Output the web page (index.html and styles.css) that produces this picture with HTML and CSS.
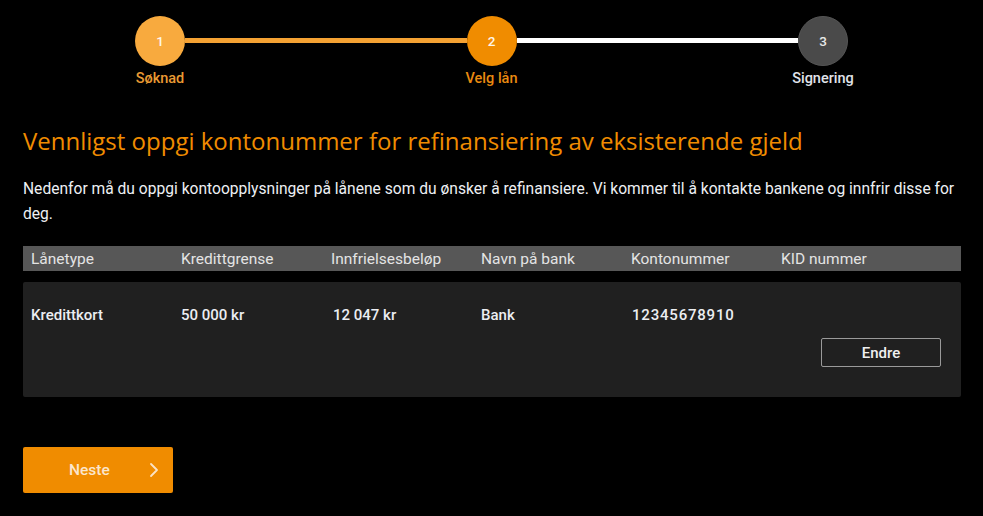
FILE: index.html
```html
<!DOCTYPE html>
<html lang="no">
<head>
<meta charset="utf-8">
<title>Velg lån</title>
<link rel="stylesheet" href="styles.css">
</head>
<body>
<div class="page">
  <div class="stepper">
    <div class="step step-done">
      <div class="circle">1</div>
      <div class="label">Søknad</div>
    </div>
    <div class="line line-done"></div>
    <div class="step step-active">
      <div class="circle">2</div>
      <div class="label">Velg lån</div>
    </div>
    <div class="line line-todo"></div>
    <div class="step step-todo">
      <div class="circle">3</div>
      <div class="label">Signering</div>
    </div>
  </div>

  <h1 class="title">Vennligst oppgi kontonummer for refinansiering av eksisterende gjeld</h1>
  <p class="intro">Nedenfor må du oppgi kontoopplysninger på lånene som du ønsker å refinansiere. Vi kommer til å kontakte bankene og innfrir disse for deg.</p>

  <div class="table-head">
    <div class="cell">Lånetype</div>
    <div class="cell">Kredittgrense</div>
    <div class="cell">Innfrielsesbeløp</div>
    <div class="cell">Navn på bank</div>
    <div class="cell">Kontonummer</div>
    <div class="cell">KID nummer</div>
  </div>

  <div class="table-row">
    <div class="row-cells">
      <div class="cell">Kredittkort</div>
      <div class="cell">50 000 kr</div>
      <div class="cell cell-amount">12 047 kr</div>
      <div class="cell">Bank</div>
      <div class="cell cell-number">12345678910</div>
      <div class="cell"></div>
    </div>
    <div class="row-actions">
      <button class="btn-outline" type="button">Endre</button>
    </div>
  </div>

  <button class="btn-next" type="button">
    <span>Neste</span>
    <svg width="10" height="16" viewBox="0 0 10 16" aria-hidden="true"><polyline points="2,2 8,8 2,14" fill="none" stroke="#fbe3c4" stroke-width="1.8" stroke-linecap="round" stroke-linejoin="round"/></svg>
  </button>
</div>
</body>
</html>
```

FILE: styles.css
```css
* { box-sizing: border-box; }
html, body {
  margin: 0;
  padding: 0;
  background: #000;
}
body {
  font-family: Roboto, "Liberation Sans", Arial, sans-serif;
  color: #e6e6e6;
}
.page {
  width: 983px;
  padding: 16px 22px 0 23px;
}

/* Stepper */
.stepper {
  display: flex;
  align-items: flex-start;
  width: 713px;
  margin-left: 112px;
  height: 70px;
}
.step {
  width: 50px;
  display: flex;
  flex-direction: column;
  align-items: center;
  flex: none;
}
.circle {
  width: 50px;
  height: 50px;
  border-radius: 50%;
  display: flex;
  align-items: center;
  justify-content: center;
  font-size: 13.5px;
  font-weight: 500;
  color: #fff6ea;
}
.label {
  margin-top: 4px;
  font-size: 14.5px;
  line-height: 17px;
  font-weight: 500;
  white-space: nowrap;
}
.step-done .circle { background: #f8aa3e; }
.step-done .label { color: #e99a33; }
.step-active .circle { background: #f08c00; }
.step-active .label { color: #ea8a10; }
.step-todo .circle { background: #4a4a4a; border: 1px solid #555; color: #e8e8e8; }
.step-todo .label { color: #e0e4ea; }
.line {
  flex: 1;
  height: 5px;
  margin-top: 22px;
}
.line-done { background: #f5a233; }
.line-todo { background: #fff; }

/* Heading and intro */
.title {
  margin: 40px 0 0;
  font-family: "Open Sans", Roboto, sans-serif;
  font-size: 24px;
  line-height: 30px;
  font-weight: 400;
  color: #f08c00;
}
.intro {
  margin: 21px 0 0;
  font-size: 15.6px;
  line-height: 25px;
  color: #eef0f4;
}

/* Table */
.table-head {
  margin-top: 19px;
  display: grid;
  grid-template-columns: repeat(6, 150px);
  height: 25px;
  align-items: center;
  background: #575757;
  font-size: 15.5px;
  font-weight: 400;
  color: #e4e4e4;
}
.cell {
  padding-left: 8px;
  white-space: nowrap;
}
.table-row {
  margin-top: 11px;
  height: 115px;
  background: #202020;
  border-radius: 2px;
  padding-top: 23px;
  display: flex;
  flex-direction: column;
}
.row-cells {
  display: grid;
  grid-template-columns: repeat(6, 150px);
  height: 20px;
  align-items: center;
  font-size: 15px;
  font-weight: 500;
  color: #eceef2;
}
.cell-amount { padding-left: 10px; }
.cell-number { padding-left: 9px; letter-spacing: 0.8px; }
.row-actions {
  display: flex;
  justify-content: flex-end;
  padding-right: 20px;
  margin-top: 13px;
}
.btn-outline {
  width: 120px;
  height: 29px;
  background: transparent;
  border: 1px solid #9a9a9a;
  border-radius: 2px;
  color: #f0f0f0;
  font-family: inherit;
  font-size: 15px;
  font-weight: 500;
  padding: 0;
}

/* Next button */
.btn-next {
  margin-top: 50px;
  width: 150px;
  height: 46px;
  background: #f08c00;
  border: none;
  border-radius: 2px;
  display: flex;
  align-items: center;
  justify-content: space-between;
  padding: 0 14px 0 46px;
  color: #fbe6cc;
  font-family: inherit;
  font-size: 15.5px;
  font-weight: 500;
}
```
